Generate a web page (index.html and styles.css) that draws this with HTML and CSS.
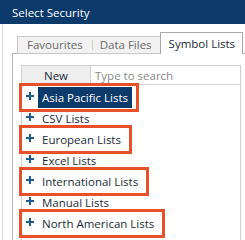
FILE: index.html
```html
<!DOCTYPE html>
<html>
<head>
<meta charset="utf-8">
<link rel="stylesheet" href="styles.css">
</head>
<body>
<div class="dialog">
  <div class="titlebar">Select Security</div>
  <div class="content">
    <div class="tabs">
      <div class="tab-group">
        <span class="tab">Favourites</span>
        <span class="tab sep">Data Files</span>
      </div>
      <span class="tab active">Symbol Lists</span>
    </div>
    <div class="panel">
      <div class="picker">
        <div class="picker-head">
          <span class="new">New</span>
          <span class="search">Type to search</span>
        </div>
        <ul class="tree">
          <li class="row marked"><svg class="plus" viewBox="0 0 8 8"><rect x="3" y="0" width="2" height="8"/><rect x="0" y="3" width="8" height="2"/></svg><span class="label selected">Asia Pacific Lists</span></li>
          <li class="row"><svg class="plus" viewBox="0 0 8 8"><rect x="3" y="0" width="2" height="8"/><rect x="0" y="3" width="8" height="2"/></svg><span class="label">CSV Lists</span></li>
          <li class="row marked"><svg class="plus" viewBox="0 0 8 8"><rect x="3" y="0" width="2" height="8"/><rect x="0" y="3" width="8" height="2"/></svg><span class="label">European Lists</span></li>
          <li class="row"><svg class="plus" viewBox="0 0 8 8"><rect x="3" y="0" width="2" height="8"/><rect x="0" y="3" width="8" height="2"/></svg><span class="label">Excel Lists</span></li>
          <li class="row marked"><svg class="plus" viewBox="0 0 8 8"><rect x="3" y="0" width="2" height="8"/><rect x="0" y="3" width="8" height="2"/></svg><span class="label">International Lists</span></li>
          <li class="row"><svg class="plus" viewBox="0 0 8 8"><rect x="3" y="0" width="2" height="8"/><rect x="0" y="3" width="8" height="2"/></svg><span class="label">Manual Lists</span></li>
          <li class="row marked"><svg class="plus" viewBox="0 0 8 8"><rect x="3" y="0" width="2" height="8"/><rect x="0" y="3" width="8" height="2"/></svg><span class="label">North American Lists</span></li>
        </ul>
      </div>
    </div>
  </div>
</div>
</body>
</html>
```

FILE: styles.css
```css
html, body {
  margin: 0;
  padding: 0;
  overflow: hidden;
  background: #ffffff;
}
body {
  font-family: "Open Sans", "DejaVu Sans", sans-serif;
  font-size: 11.5px;
  color: #222c38;
}
.dialog {
  width: 245px;
  height: 240px;
  display: flex;
  flex-direction: column;
  overflow: hidden;
}
.titlebar {
  height: 24px;
  line-height: 25px;
  background: #0b3a6b;
  color: #ffffff;
  padding-left: 12px;
  flex: none;
}
.content {
  flex: 1;
  min-height: 0;
  display: flex;
  flex-direction: column;
  margin-left: 2px;
  border-left: 1px solid #dedede;
  padding-top: 8px;
}
.tabs {
  display: flex;
  align-items: flex-end;
  margin-left: 14px;
  position: relative;
  z-index: 1;
  margin-bottom: -1px;
}
.tab-group {
  display: flex;
  align-items: center;
  height: 16px;
  background: #f2f2f2;
  border: 1px solid #c8c8c8;
  border-right: none;
  color: #6a6a6a;
}
.tab {
  display: block;
  padding: 0 9px;
  line-height: 16px;
}
.tab.sep {
  padding: 0 8px 0 7px;
  border-left: 1px solid #cfcfcf;
  line-height: 10px;
}
.tab.active {
  height: 21px;
  line-height: 21px;
  padding: 0 7px 0 8px;
  background: #ffffff;
  border: 1px solid #a9a9a9;
  border-bottom: none;
  color: #222c38;
}
.panel {
  flex: 1;
  min-height: 0;
  display: flex;
  flex-direction: column;
  margin-left: 9px;
  border-top: 1px solid #b0b0b0;
  border-left: 1px solid #b8b8b8;
  padding: 11px 0 0 8px;
}
.picker {
  flex: 1;
  min-height: 0;
  width: 220px;
  box-sizing: border-box;
  border: 1px solid #cfcfcf;
  border-bottom: none;
}
.picker-head {
  display: flex;
  height: 18px;
  border-bottom: 1px solid #d6d6d6;
}
.new {
  width: 68px;
  background: #eeeeee;
  border-right: 1px solid #d2d2d2;
  text-align: center;
  line-height: 19px;
  color: #222c38;
}
.search {
  padding-left: 4px;
  line-height: 19px;
  color: #8a8a8a;
}
.tree {
  list-style: none;
  margin: 0;
  padding: 2px 0 0 1px;
}
.row {
  display: flex;
  align-items: center;
  width: max-content;
  height: 21px;
  padding: 0 3px;
}
.row.marked {
  outline: 3px solid #e8502b;
  outline-offset: 1px;
}
.plus {
  width: 8px;
  height: 8px;
  fill: #1d5a99;
  margin-right: 4px;
  margin-top: -3px;
}
.label {
  padding: 0 4px;
  line-height: 21px;
}
.label.selected {
  background: #0b3a6b;
  color: #ffffff;
}
```
